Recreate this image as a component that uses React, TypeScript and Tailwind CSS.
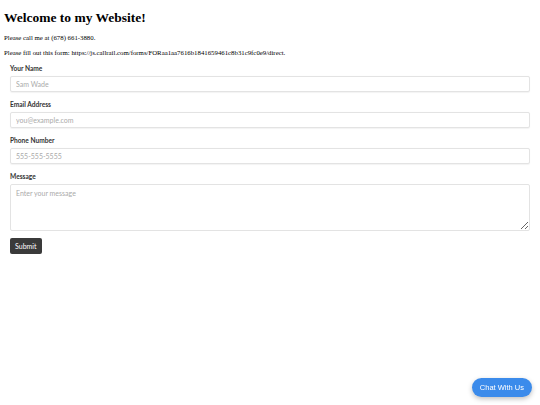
export default function App() {
  const field =
    "block w-full h-4 rounded-[2px] border border-[#e3e3e3] bg-white px-[5px] text-[7px] text-[#555] placeholder:text-[#aaa] shadow-[0_0.5px_1px_rgba(0,0,0,0.05)] outline-none";
  const label = "block text-[6.6px] leading-[9px] font-bold text-[#333] mb-[3px]";

  return (
    <div className="min-h-[405px] bg-white px-1 pt-[9px] font-['Liberation_Serif',serif] text-black">
      <h1 className="text-[13.5px] font-bold leading-[17px]">Welcome to my Website!</h1>
      <p className="mt-[7px] text-[6.8px] leading-[9px]">Please call me at (678) 661-3880.</p>
      <p className="mt-[6px] text-[6.8px] leading-[9px]">
        Please fill out this form: https://js.callrail.com/forms/FORaa1aa7616b1841659461c8b31c9fc0e9/direct.
      </p>

      <form className="mt-[7px] px-[6px] font-['Lato','Open_Sans',sans-serif]">
        <div className="mb-[8px]">
          <label className={label}>Your Name</label>
          <input className={field} placeholder="Sam Wade" />
        </div>
        <div className="mb-[8px]">
          <label className={label}>Email Address</label>
          <input className={field} placeholder="you@example.com" />
        </div>
        <div className="mb-[8px]">
          <label className={label}>Phone Number</label>
          <input className={field} placeholder="555-555-5555" />
        </div>
        <div className="mb-[7px]">
          <label className={label}>Message</label>
          <textarea
            className="block h-[47px] w-full rounded-[2px] border border-[#e3e3e3] bg-white px-[5px] py-[3px] text-[7px] text-[#555] placeholder:text-[#aaa] outline-none resize-y"
            placeholder="Enter your message"
          />
        </div>
        <button
          type="button"
          className="block h-4 rounded-[2px] bg-[#3a3a3a] px-[5px] text-[7px] text-white"
        >
          Submit
        </button>
      </form>

      <button
        type="button"
        className="fixed bottom-[8px] right-[8px] h-[19px] rounded-full bg-[#3b8beb] px-[8px] font-['Liberation_Sans',Arial,sans-serif] text-[7.5px] text-white shadow-[0_2px_5px_rgba(0,0,0,0.25)]"
      >
        Chat With Us
      </button>
    </div>
  );
}
